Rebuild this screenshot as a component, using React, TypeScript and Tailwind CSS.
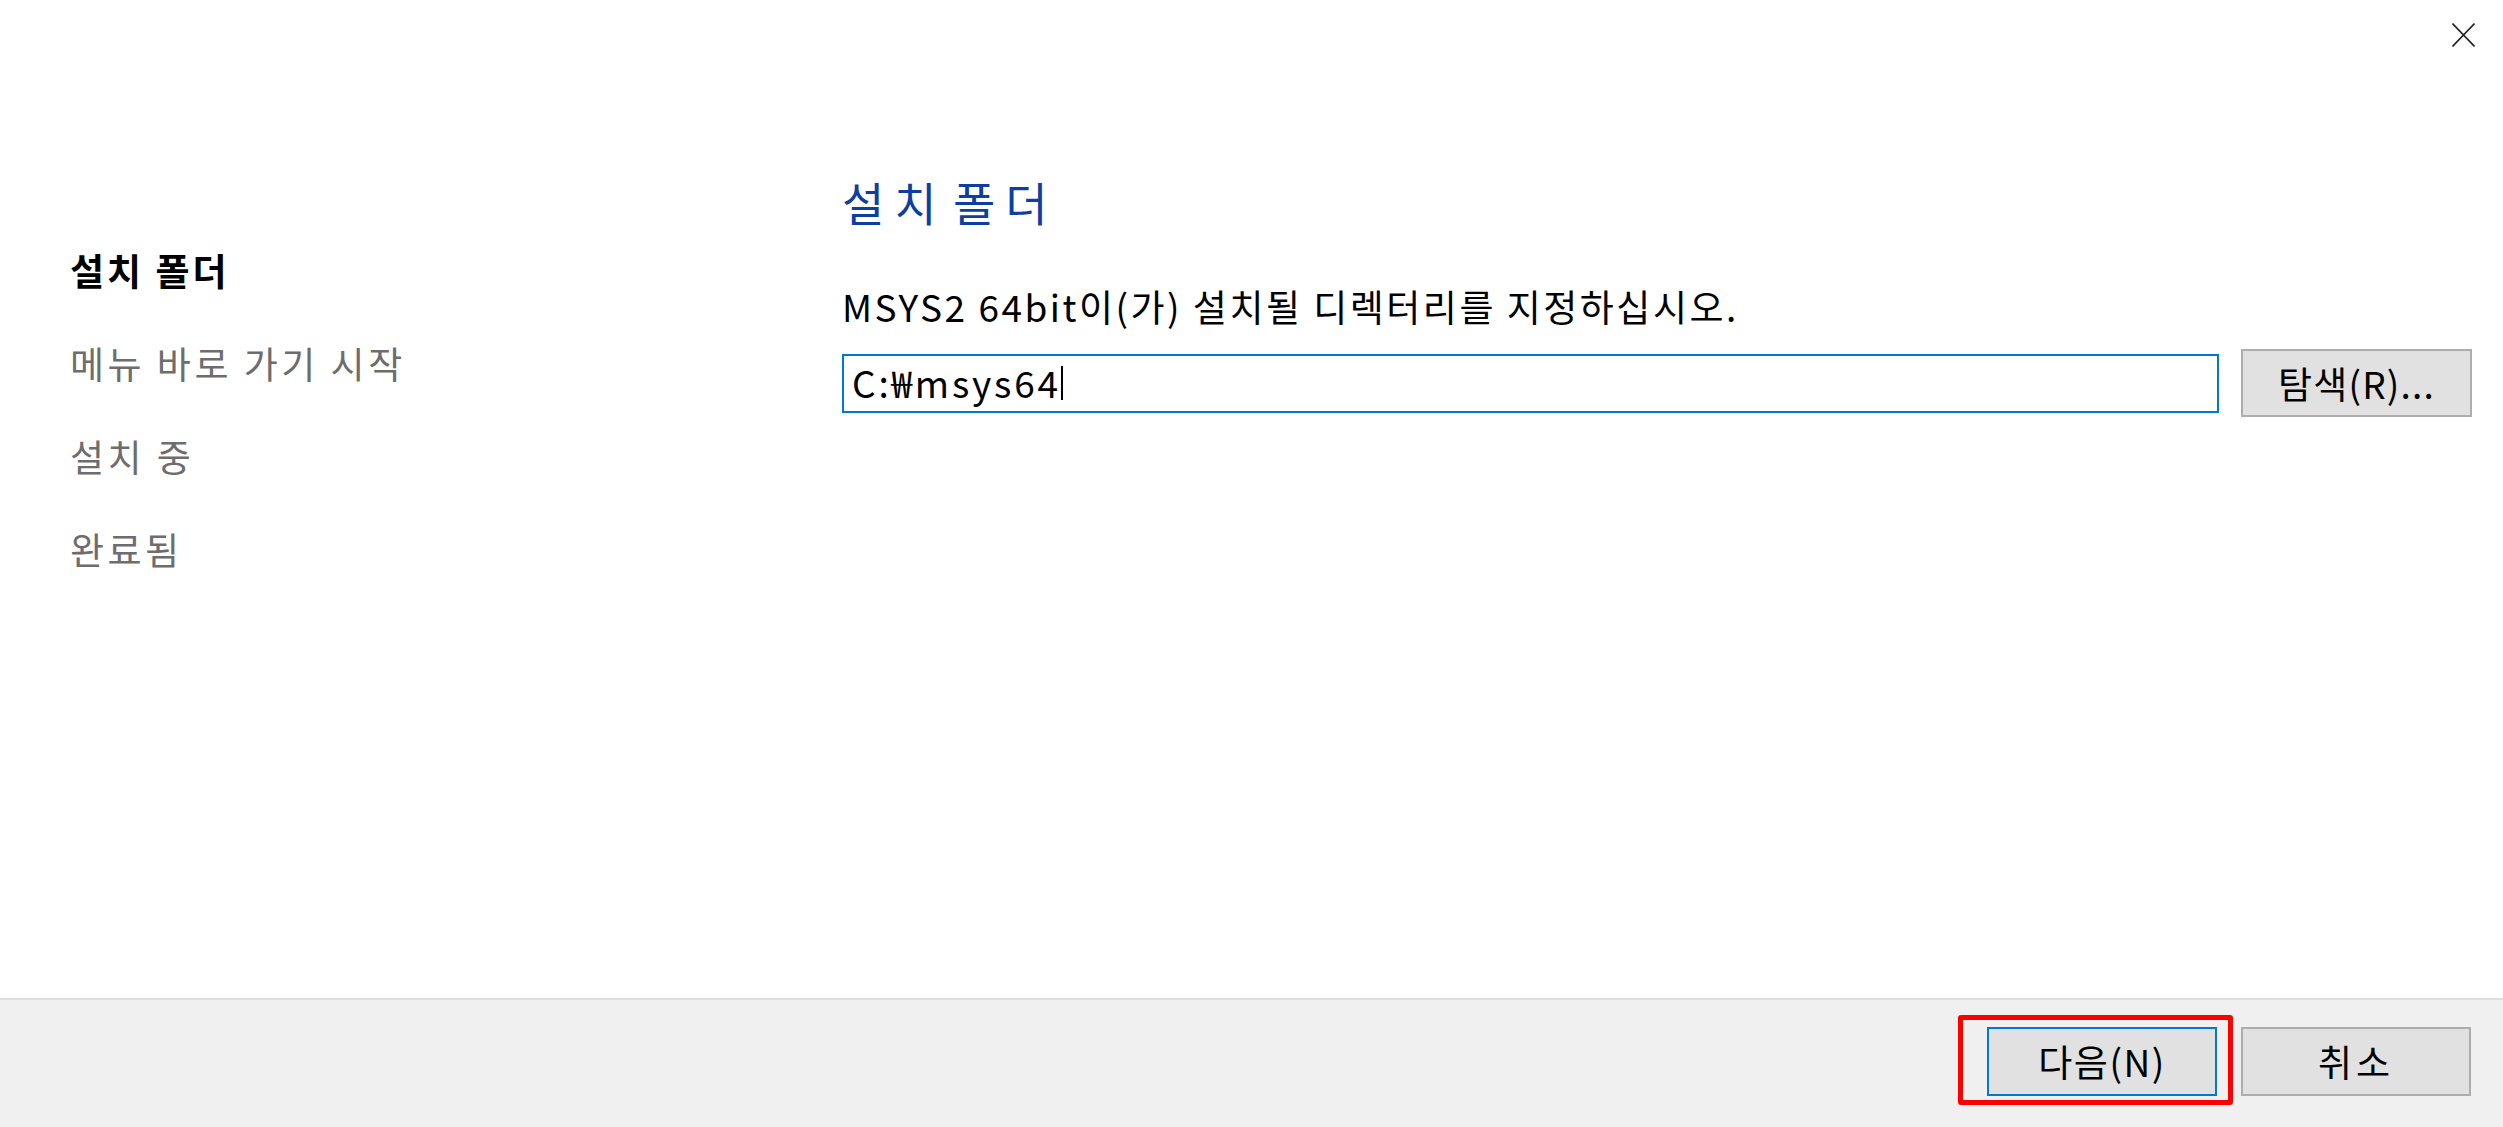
import { X } from "lucide-react";

const steps = [
  { label: "설치 폴더", active: true },
  { label: "메뉴 바로 가기 시작", active: false },
  { label: "설치 중", active: false },
  { label: "완료됨", active: false },
];

export default function App() {
  return (
    <div className="relative flex h-[1127px] w-[2503px] flex-col overflow-hidden bg-white font-['Noto_Sans_CJK_KR',sans-serif] text-black">
      {/* window close */}
      <button className="absolute right-[28px] top-[23px] flex h-[24px] w-[23px] items-center justify-center text-[#222]">
        <svg width="23" height="24" viewBox="0 0 23 24">
          <path d="M0.5 0.5 L22.5 23.5 M22.5 0.5 L0.5 23.5" stroke="currentColor" strokeWidth="1.6" fill="none" />
        </svg>
      </button>

      <div className="flex h-[998px] flex-row">
        {/* Step list */}
        <div className="flex w-[842px] shrink-0 flex-col pl-[70px] pt-[224px]">
          {steps.map((s) => (
            <div
              key={s.label}
              className={
                s.active
                  ? "h-[93px] text-[37px] font-bold leading-[93px] tracking-[3px] text-black"
                  : "h-[93px] text-[37px] leading-[93px] tracking-[3.5px] text-[#6d6d6d]"
              }
            >
              {s.label}
            </div>
          ))}
        </div>

        {/* Page content */}
        <div className="flex flex-1 flex-col pr-[31px] pt-[179px]">
          <h1 className="h-[45px] text-[46px] font-normal leading-[45px] tracking-[10px] text-[#0f3ea1] [word-spacing:-14px]">
            설치 폴더
          </h1>
          <p className="mt-[58px] h-[48px] text-[37px] leading-[48px] tracking-[2.5px]">
            MSYS2 64bit이(가) 설치될 디렉터리를 지정하십시오.
          </p>
          <div className="mt-[19px] flex items-center gap-[22px]">
            <div className="flex h-[59px] flex-1 items-center border-2 border-[#0078d7] bg-white pl-[8px] text-[37px] tracking-[2.8px]">
              <span>C:₩msys64</span>
              <span className="inline-block h-[34px] w-[2px] bg-black" />
            </div>
            <button className="h-[68px] w-[231px] border-2 border-[#adadad] bg-[#e1e1e1] text-[37px] leading-none tracking-[1.2px] text-black">
              탐색(R)...
            </button>
          </div>
        </div>
      </div>

      {/* Footer */}
      <div className="flex flex-1 items-start justify-end gap-[24px] border-t-2 border-[#dfdfdf] bg-[#f0f0f0] pr-[32px] pt-[27px]">
        <div className="relative">
          <button className="h-[69px] w-[230px] border-2 border-[#0078d7] bg-[#e1e1e1] text-[37px] leading-none tracking-[1.5px] text-black">
            다음(N)
          </button>
          <div className="pointer-events-none absolute left-[-29px] top-[-12px] h-[90px] w-[275px] rounded-[3px] border-[5px] border-[#ff0000]" />
        </div>
        <button className="h-[69px] w-[230px] border-2 border-[#adadad] bg-[#e1e1e1] text-[37px] leading-none tracking-[4px] text-black">
          취소
        </button>
      </div>
    </div>
  );
}
